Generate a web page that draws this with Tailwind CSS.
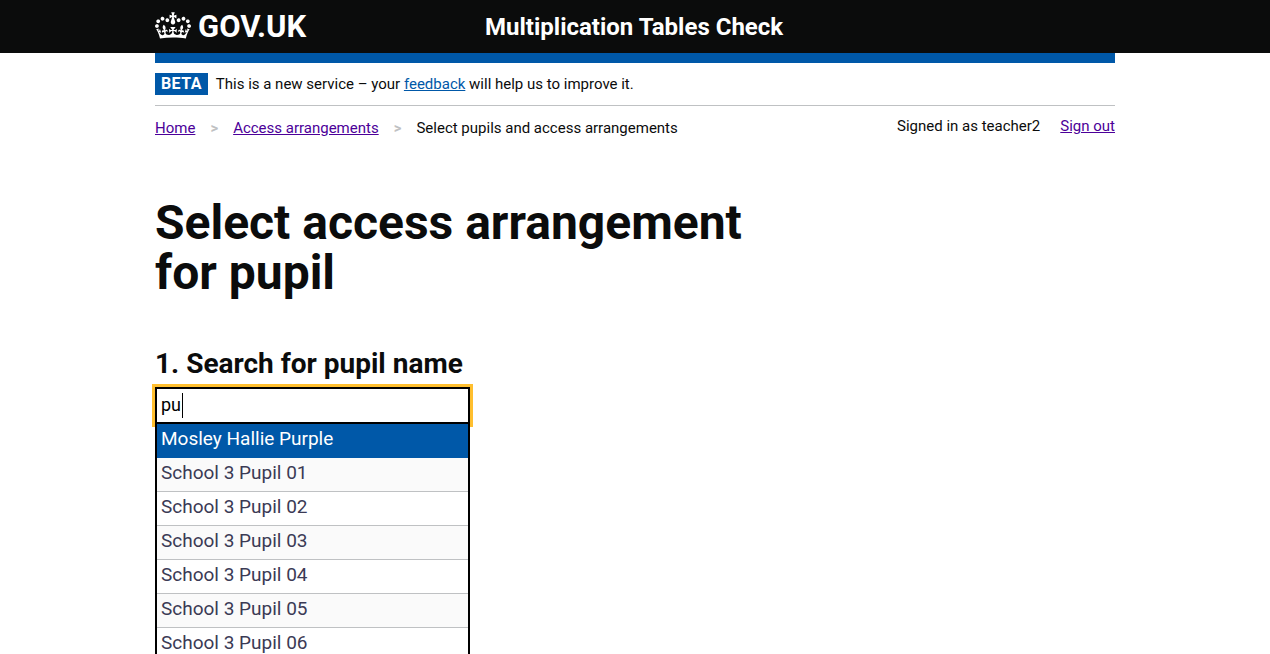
<!DOCTYPE html>
<html lang="en">
<head>
<meta charset="utf-8">
<meta name="viewport" content="width=device-width, initial-scale=1">
<title>Select access arrangement for pupil</title>
<script src="https://cdn.jsdelivr.net/npm/@tailwindcss/browser@4"></script>
</head>
<body class="h-screen overflow-hidden bg-white font-['Roboto','Liberation_Sans',sans-serif] text-[15px] text-[#0b0c0c]">
<header class="bg-[#0b0c0c] text-white">
  <div class="mx-auto flex h-[53px] max-w-[960px] items-center">
    <div class="w-[330px]">
      <a href="#" class="flex w-fit items-center gap-[7px] text-[31px] leading-[30px] font-bold">
        <svg class="mb-[3px] h-[27px] w-9" viewBox="0 0 132 97" fill="currentColor" aria-hidden="true"><path fill-rule="evenodd" d="M25 30.2c3.5 1.5 7.7-.2 9.1-3.7 1.5-3.6-.2-7.8-3.9-9.2-3.6-1.4-7.6.3-9.1 3.9-1.4 3.5.3 7.5 3.9 9zM9 39.5c3.6 1.5 7.8-.2 9.2-3.7 1.5-3.6-.2-7.8-3.9-9.1-3.6-1.5-7.6.2-9.1 3.8-1.4 3.5.3 7.5 3.8 9zM4.4 57.2c3.5 1.5 7.7-.2 9.1-3.8 1.5-3.6-.2-7.7-3.9-9.1-3.5-1.5-7.6.3-9.1 3.8-1.4 3.5.3 7.6 3.9 9.1zm38.3-21.4c3.5 1.5 7.7-.2 9.1-3.8 1.5-3.6-.2-7.7-3.9-9.1-3.6-1.5-7.6.3-9.1 3.8-1.3 3.6.4 7.7 3.9 9.1zm64.4-5.6c-3.6 1.5-7.8-.2-9.1-3.7-1.5-3.6.2-7.8 3.8-9.2 3.6-1.4 7.7.3 9.2 3.9 1.3 3.5-.4 7.5-3.9 9zm15.9 9.3c-3.6 1.5-7.7-.2-9.1-3.7-1.5-3.6.2-7.8 3.7-9.1 3.6-1.5 7.7.2 9.2 3.8 1.5 3.5-.3 7.5-3.8 9zm4.7 17.7c-3.6 1.5-7.8-.2-9.2-3.8-1.5-3.6.2-7.7 3.9-9.1 3.6-1.5 7.7.3 9.2 3.8 1.3 3.5-.4 7.6-3.9 9.1zM89.3 35.8c-3.6 1.5-7.8-.2-9.2-3.8-1.4-3.6.2-7.7 3.9-9.1 3.6-1.5 7.7.3 9.2 3.8 1.4 3.6-.3 7.7-3.9 9.1zM69.7 17.7l8.9 4.7V9.3l-8.9 2.8c-.2-.3-.5-.6-.9-.9L72.4 0H59.6l3.5 11.2c-.3.3-.6.5-.9.9l-8.8-2.8v13.1l8.8-4.7c.3.3.6.7.9.9l-5 15.4v.1c-.2.8-.4 1.6-.4 2.4 0 4.1 3.1 7.5 7 8.1h.2c.3 0 .7.1 1 .1.4 0 .7 0 1-.1h.2c4-.6 7.1-4.1 7.1-8.1 0-.8-.1-1.7-.4-2.4V34l-5.1-15.4c.4-.2.7-.6 1-.9zM66 92.8c16.9 0 32.8 1.1 47.1 3.2 4-16.9 8.9-26.7 14-33.5l-9.6-3.4c1 4.9 1.1 7.2 0 10.2-1.5-1.4-3-4.3-4.2-8.7L108.6 76c2.8-2 5-3.2 7.5-3.3-4.4 9.4-10 11.9-13.6 11.2-4.3-.8-6.3-4.6-5.6-7.9 1-4.7 5.7-5.9 8-.5 4.3-8.7-3-11.4-7.6-8.8 7.1-7.2 7.9-13.5 2.1-21.1-8 6.1-8.1 12.3-4.5 20.8-4.7-5.4-12.1-2.5-9.5 6.2 3.4-5.2 7.9-2 7.2 3.1-.6 4.3-6.4 7.8-13.5 7.2-10.3-.9-10.9-8-11.2-13.8 2.5-.5 7.1 1.8 11 7.3L80.2 60c-4.1 4.4-8 5.3-12.3 5.4 1.4-4.4 8-11.6 8-11.6H55.5s6.4 7.2 7.9 11.6c-4.2-.1-8-1-12.3-5.4l1.4 16.4c3.9-5.5 8.5-7.7 10.9-7.3-.3 5.8-.9 12.8-11.1 13.8-7.2.6-12.9-2.9-13.5-7.2-.7-5 3.8-8.3 7.1-3.1 2.7-8.7-4.6-11.6-9.4-6.2 3.7-8.5 3.6-14.7-4.6-20.8-5.8 7.6-5 13.9 2.2 21.1-4.7-2.6-11.9.1-7.7 8.8 2.3-5.5 7.1-4.2 8.1.5.7 3.3-1.3 7.1-5.7 7.9-3.5.7-9-1.8-13.5-11.2 2.5.1 4.7 1.3 7.5 3.3l-4.7-15.4c-1.2 4.4-2.7 7.2-4.3 8.7-1.1-3-.9-5.3 0-10.2l-9.5 3.4c5 6.9 9.9 16.7 14 33.5 14.8-2.1 30.8-3.2 47.7-3.2z"/></svg>
        GOV.UK
      </a>
    </div>
    <a href="#" class="text-2xl leading-[30px] font-bold">Multiplication Tables Check</a>
  </div>
</header>
<div class="mx-auto max-w-[960px]">
  <div class="h-[10px] bg-[#0058a8]"></div>
  <div class="flex items-center gap-2 border-b border-[#bfc1c3] py-[10px]">
    <strong class="bg-[#0058a8] px-[6px] text-base leading-[22px] font-bold tracking-wide text-white">BETA</strong>
    <p class="leading-[22px]">This is a new service – your <a href="#" class="text-[#0058a8] underline">feedback</a> will help us to improve it.</p>
  </div>
  <div class="flex items-start justify-between">
    <nav aria-label="Breadcrumb" class="pt-3">
      <ol class="flex leading-5">
        <li><a href="#" class="text-[#4c0099] underline">Home</a><span class="px-[15px] font-bold text-[#bfc1c3]" aria-hidden="true">&gt;</span></li>
        <li><a href="#" class="text-[#4c0099] underline">Access arrangements</a><span class="px-[15px] font-bold text-[#bfc1c3]" aria-hidden="true">&gt;</span></li>
        <li>Select pupils and access arrangements</li>
      </ol>
    </nav>
    <div class="flex gap-5 pt-[10px] leading-5">
      <span>Signed in as teacher2</span>
      <a href="#" class="text-[#4c0099] underline">Sign out</a>
    </div>
  </div>
  <main class="pt-[60px]">
    <h1 class="max-w-[640px] text-5xl leading-[50px] font-bold">Select access arrangement for pupil</h1>
    <label for="pupil" class="mt-12 block text-[28px] leading-[35px] font-bold">1. Search for pupil name</label>
    <div class="relative mt-[6px] w-[315px]">
      <input id="pupil" type="text" value="pu" autocomplete="off" role="combobox" aria-expanded="true" aria-controls="pupils" class="block h-[37px] w-full border-2 border-black bg-white px-1 pb-[3px] text-lg text-black outline-3 outline-[#ffbf2f]">
      <span class="absolute top-[6px] left-[27px] h-[25px] w-px bg-black"></span>
      <ul id="pupils" role="listbox" aria-label="Pupils" class="absolute inset-x-0 top-[37px] border-x-2 border-b-2 border-black bg-white text-[19px] leading-[30px] text-[#3b3a55]">
        <li role="option" aria-selected="true" class="h-[34px] bg-[#0058a8] px-1 text-white">Mosley Hallie Purple</li>
        <li role="option" class="h-[34px] border-b border-[#bfc1c3] bg-[#fafafa] px-1">School 3 Pupil 01</li>
        <li role="option" class="h-[34px] border-b border-[#bfc1c3] px-1">School 3 Pupil 02</li>
        <li role="option" class="h-[34px] border-b border-[#bfc1c3] bg-[#fafafa] px-1">School 3 Pupil 03</li>
        <li role="option" class="h-[34px] border-b border-[#bfc1c3] px-1">School 3 Pupil 04</li>
        <li role="option" class="h-[34px] border-b border-[#bfc1c3] bg-[#fafafa] px-1">School 3 Pupil 05</li>
        <li role="option" class="h-[34px] border-b border-[#bfc1c3] px-1">School 3 Pupil 06</li>
      </ul>
    </div>
  </main>
</div>
</body>
</html>
